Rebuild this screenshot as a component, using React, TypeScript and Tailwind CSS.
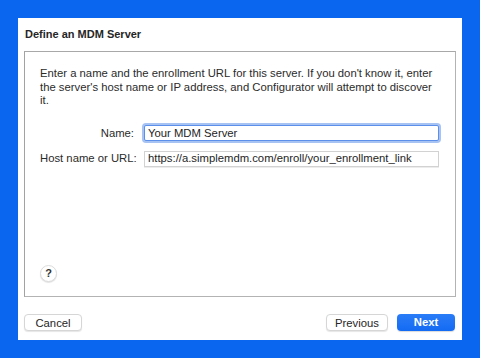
import React from "react";

const font = { fontFamily: '"Liberation Sans", Arial, sans-serif' };

const Field = ({
  label,
  value,
  focused,
}: {
  label: string;
  value: string;
  focused?: boolean;
}) => {
  return (
    <div className="flex items-center">
      <div className="w-[104px] whitespace-nowrap pr-[10px] text-right text-[11.3px] text-[#2b2b2b]">{label}</div>
      <div
        className={
          focused
            ? "flex h-[16px] flex-1 items-center rounded-[2px] border border-[#5c8fea] bg-white pl-[3px] text-[11.3px] text-[#1e1e1e] ring-[2px] ring-[#a7c3f4]"
            : "flex h-[16px] flex-1 items-center border border-[#d2d2d2] bg-white pl-[3px] text-[11.3px] text-[#1e1e1e] shadow-[0_1px_0_#ececec]"
        }
      >
        {value}
      </div>
    </div>
  );
};

export default function App() {
  return (
    <div className="h-[358px] w-[480px] bg-[#0a66ee] pl-[18px] pt-[18px]" style={font}>
      <div className="flex h-[322px] w-[444px] flex-col bg-white px-[6px]">
        <div className="flex h-[33px] items-center pb-[1px] pl-[1px] text-[11px] font-bold text-[#262626]">
          Define an MDM Server
        </div>
        <div className="flex h-[246px] flex-col border border-[#b3b3b3] border-l-[#a2a2a2] border-t-[#a8a8a8] px-[15px] pb-[14px] pt-[15px]">
          <p className="text-[11.3px] leading-[13.5px] text-[#2b2b2b]">
            Enter a name and the enrollment URL for this server. If you don't know it, enter the server's host name or IP address, and Configurator will attempt to discover it.
          </p>
          <div className="mt-[17px] flex flex-col gap-[9px] pr-[1px]">
            <Field label="Name:" value="Your MDM Server" focused />
            <Field label="Host name or URL:" value="https://a.simplemdm.com/enroll/your_enrollment_link" />
          </div>
          <div className="mt-auto flex h-[17px] w-[17px] items-center justify-center rounded-full border border-[#dcdcdc] bg-white text-[11px] font-bold text-[#333] shadow-[0_1px_1px_rgba(0,0,0,0.12)]">
            ?
          </div>
        </div>
        <div className="mt-[17px] flex items-center pr-[1px]">
          <button className="h-[17px] w-[58px] rounded-[4px] border border-[#d6d6d6] bg-white text-[11.3px] text-[#262626] shadow-[0_1px_1px_rgba(0,0,0,0.1)]">
            Cancel
          </button>
          <div className="flex-1" />
          <button className="h-[17px] w-[62px] rounded-[4px] border border-[#d6d6d6] bg-white text-[11.3px] text-[#262626] shadow-[0_1px_1px_rgba(0,0,0,0.1)]">
            Previous
          </button>
          <button className="ml-[9px] h-[17px] w-[58px] rounded-[4px] bg-gradient-to-b from-[#2a7cf7] to-[#136bf3] text-[11.3px] font-bold text-white shadow-[0_1px_1px_rgba(0,0,0,0.15)]">
            Next
          </button>
        </div>
      </div>
    </div>
  );
}
